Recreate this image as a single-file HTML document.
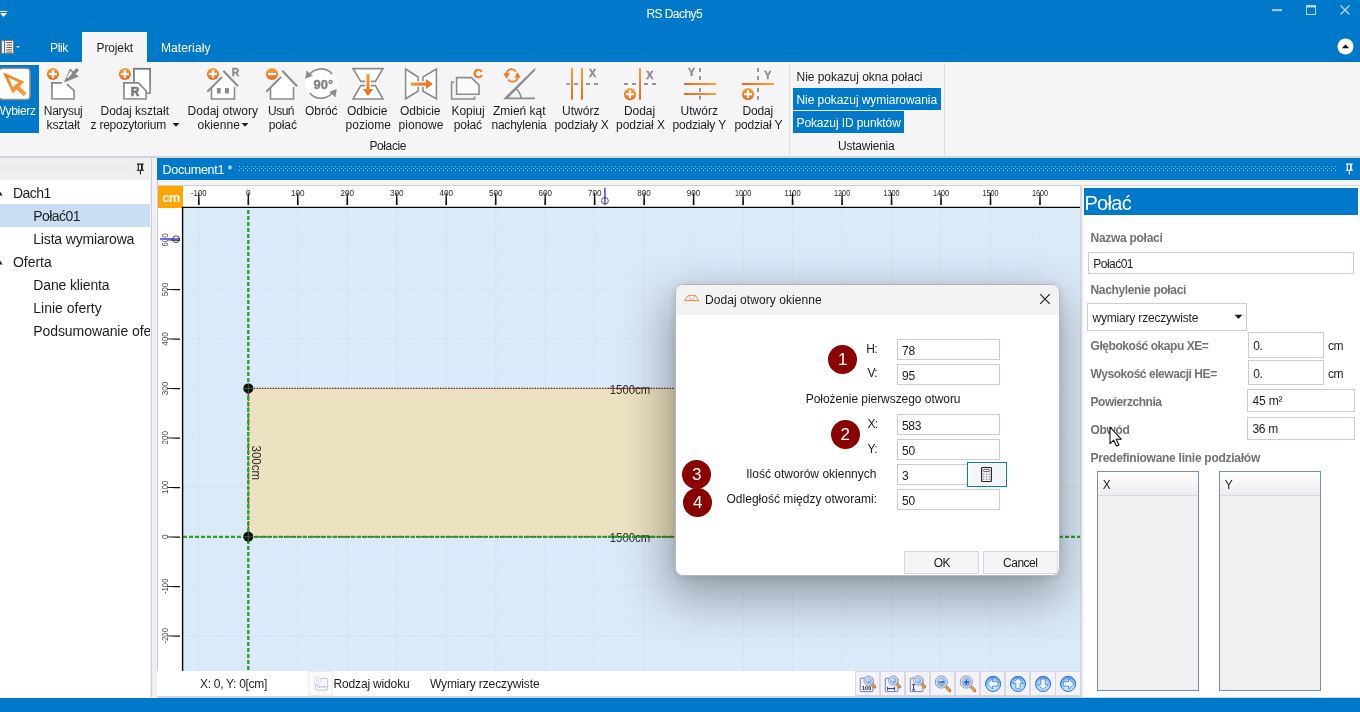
<!DOCTYPE html>
<html lang="pl"><head><meta charset="utf-8"><title>RS Dachy5</title>
<style>
html,body{margin:0;padding:0;}
body{width:1360px;height:712px;overflow:hidden;position:relative;background:#fff;font-family:"Liberation Sans", "DejaVu Sans", sans-serif;}
#app{position:absolute;left:0;top:0;width:1360px;height:712px;overflow:hidden;will-change:transform;}
#app div,#app svg{position:absolute;box-sizing:border-box;}
.t{position:absolute;white-space:pre;}
</style></head><body><div id="app">
<div style="left:0px;top:0px;width:1360px;height:62px;background:#0079cb;"></div>
<span class="t" style="left:646.5px;top:6.0px;line-height:16px;font-size:12px;letter-spacing:-0.578px;color:#fff;font-weight:400;">RS Dachy5</span>
<svg style="left:1268px;top:0;width:92px;height:24px" viewBox="0 0 92 24"><rect x="4" y="9" width="10" height="2.2" fill="#9dcbef"/><rect x="38.5" y="5.5" width="9" height="9" fill="none" stroke="#b5d8f3" stroke-width="1"/><rect x="38" y="5" width="10" height="2.5" fill="#b5d8f3"/><path d="M72.5 5.5 L81.5 14.5 M81.5 5.5 L72.5 14.5" stroke="#b5d8f3" stroke-width="1.3" fill="none"/></svg>
<svg style="left:1337px;top:38px;width:17px;height:17px" viewBox="0 0 17 17"><circle cx="8.5" cy="8.5" r="8" fill="#fff"/><path d="M4.8 10.2 L12.2 10.2 L8.5 6.5 Z" fill="#111"/></svg>
<div style="left:82px;top:32px;width:65px;height:31px;background:#f5f5f7;"></div>
<span class="t" style="left:50px;top:39.5px;line-height:16px;font-size:12px;letter-spacing:-0.336px;color:#fff;font-weight:400;">Plik</span>
<span class="t" style="left:96.5px;top:39.5px;line-height:16px;font-size:12px;letter-spacing:-0.123px;color:#1e1e1e;font-weight:400;">Projekt</span>
<span class="t" style="left:161px;top:39.5px;line-height:16px;font-size:12px;letter-spacing:0.09px;color:#fff;font-weight:400;">Materiały</span>
<svg style="left:0;top:38px;width:24px;height:18px" viewBox="0 38 24 18"><rect x="1.6" y="40.6" width="11.8" height="12.8" fill="#fff" stroke="#84766e" stroke-width="1"/><path d="M4.6 41V53" stroke="#4a4a4a" stroke-width="0.9"/><path d="M6.4 42.6h5.6M6.4 45h5.6M6.4 47.4h5.6M6.4 49.8h5.6M6.4 52h5.6" stroke="#3a3a3a" stroke-width="0.9"/><path d="M15.7 46h4.4l-2.2 2.3z" fill="#c9c5c2"/></svg>
<svg style="left:0;top:8px;width:8px;height:12px" viewBox="0 8 8 12"><rect x="0" y="10.9" width="7.2" height="1.1" fill="#fff"/><path d="M0 13.1h7.2L3.4 17.1z" fill="#fff"/></svg>
<div style="left:0px;top:62px;width:1360px;height:94px;background:#f5f5f7;"></div>
<div style="left:0px;top:156px;width:1360px;height:2px;background:#d2d3dc;"></div>
<div style="left:789px;top:63px;width:1px;height:92px;background:#dcdde4;"></div>
<div style="left:944px;top:63px;width:1px;height:92px;background:#dcdde4;"></div>
<div style="left:0px;top:65px;width:39px;height:68px;background:#0079cb;"></div>
<span class="t" style="left:-5.5px;top:102.8px;line-height:16px;font-size:12px;letter-spacing:-0.283px;color:#fff;font-weight:400;">Wybierz</span>
<span class="t" style="left:43.75px;top:102.8px;line-height:16px;font-size:12px;letter-spacing:-0.277px;color:#1e1e1e;font-weight:400;">Narysuj</span>
<span class="t" style="left:46.5px;top:116.6px;line-height:16px;font-size:12px;letter-spacing:-0.074px;color:#1e1e1e;font-weight:400;">kształt</span>
<span class="t" style="left:100.5px;top:102.8px;line-height:16px;font-size:12px;letter-spacing:-0.016px;color:#1e1e1e;font-weight:400;">Dodaj kształt</span>
<span class="t" style="left:90.5px;top:116.6px;line-height:16px;font-size:12px;letter-spacing:-0.229px;color:#1e1e1e;font-weight:400;">z repozytorium</span>
<span class="t" style="left:187.5px;top:102.8px;line-height:16px;font-size:12px;letter-spacing:0.039px;color:#1e1e1e;font-weight:400;">Dodaj otwory</span>
<span class="t" style="left:197.5px;top:116.6px;line-height:16px;font-size:12px;letter-spacing:0.065px;color:#1e1e1e;font-weight:400;">okienne</span>
<span class="t" style="left:268px;top:102.8px;line-height:16px;font-size:12px;letter-spacing:-0.504px;color:#1e1e1e;font-weight:400;">Usuń</span>
<span class="t" style="left:268.75px;top:116.6px;line-height:16px;font-size:12px;letter-spacing:-0.138px;color:#1e1e1e;font-weight:400;">połać</span>
<span class="t" style="left:305px;top:102.8px;line-height:16px;font-size:12px;letter-spacing:-0.037px;color:#1e1e1e;font-weight:400;">Obróć</span>
<span class="t" style="left:347px;top:102.8px;line-height:16px;font-size:12px;letter-spacing:-0.027px;color:#1e1e1e;font-weight:400;">Odbicie</span>
<span class="t" style="left:345.5px;top:116.6px;line-height:16px;font-size:12px;letter-spacing:0.02px;color:#1e1e1e;font-weight:400;">poziome</span>
<span class="t" style="left:400px;top:102.8px;line-height:16px;font-size:12px;letter-spacing:-0.027px;color:#1e1e1e;font-weight:400;">Odbicie</span>
<span class="t" style="left:398.5px;top:116.6px;line-height:16px;font-size:12px;letter-spacing:0.042px;color:#1e1e1e;font-weight:400;">pionowe</span>
<span class="t" style="left:451.5px;top:102.8px;line-height:16px;font-size:12px;letter-spacing:-0.06px;color:#1e1e1e;font-weight:400;">Kopiuj</span>
<span class="t" style="left:453.75px;top:116.6px;line-height:16px;font-size:12px;letter-spacing:-0.087px;color:#1e1e1e;font-weight:400;">połać</span>
<span class="t" style="left:493px;top:102.8px;line-height:16px;font-size:12px;letter-spacing:-0.021px;color:#1e1e1e;font-weight:400;">Zmień kąt</span>
<span class="t" style="left:491.5px;top:116.6px;line-height:16px;font-size:12px;letter-spacing:-0.237px;color:#1e1e1e;font-weight:400;">nachylenia</span>
<span class="t" style="left:562px;top:102.8px;line-height:16px;font-size:12px;letter-spacing:0.026px;color:#1e1e1e;font-weight:400;">Utwórz</span>
<span class="t" style="left:554.5px;top:116.6px;line-height:16px;font-size:12px;letter-spacing:-0.113px;color:#1e1e1e;font-weight:400;">podziały X</span>
<span class="t" style="left:624px;top:102.8px;line-height:16px;font-size:12px;letter-spacing:-0.072px;color:#1e1e1e;font-weight:400;">Dodaj</span>
<span class="t" style="left:616px;top:116.6px;line-height:16px;font-size:12px;letter-spacing:-0.042px;color:#1e1e1e;font-weight:400;">podział X</span>
<span class="t" style="left:680.5px;top:102.8px;line-height:16px;font-size:12px;letter-spacing:0.026px;color:#1e1e1e;font-weight:400;">Utwórz</span>
<span class="t" style="left:672.5px;top:116.6px;line-height:16px;font-size:12px;letter-spacing:-0.166px;color:#1e1e1e;font-weight:400;">podziały Y</span>
<span class="t" style="left:742.5px;top:102.8px;line-height:16px;font-size:12px;letter-spacing:-0.172px;color:#1e1e1e;font-weight:400;">Dodaj</span>
<span class="t" style="left:734.5px;top:116.6px;line-height:16px;font-size:12px;letter-spacing:-0.128px;color:#1e1e1e;font-weight:400;">podział Y</span>
<svg style="left:172px;top:122px;width:8px;height:6px" viewBox="0 0 8 6"><path d="M0.5 1h7L4 4.8z" fill="#1e1e1e"/></svg>
<svg style="left:241px;top:122px;width:8px;height:6px" viewBox="0 0 8 6"><path d="M0.5 1h7L4 4.8z" fill="#1e1e1e"/></svg>
<span class="t" style="left:369.5px;top:137.5px;line-height:16px;font-size:12px;letter-spacing:-0.408px;color:#1e1e1e;font-weight:400;">Połacie</span>
<span class="t" style="left:796.5px;top:69.0px;line-height:16px;font-size:12px;letter-spacing:-0.033px;color:#1e1e1e;font-weight:400;">Nie pokazuj okna połaci</span>
<div style="left:793px;top:88px;width:148px;height:22px;background:#0079cb;"></div>
<span class="t" style="left:796.5px;top:92.0px;line-height:16px;font-size:12px;letter-spacing:-0.065px;color:#fff;font-weight:400;">Nie pokazuj wymiarowania</span>
<div style="left:793px;top:111px;width:111px;height:22px;background:#0079cb;"></div>
<span class="t" style="left:796.5px;top:114.5px;line-height:16px;font-size:12px;letter-spacing:-0.101px;color:#fff;font-weight:400;">Pokazuj ID punktów</span>
<span class="t" style="left:838px;top:138.0px;line-height:16px;font-size:12px;letter-spacing:-0.22px;color:#1e1e1e;font-weight:400;">Ustawienia</span>
<svg style="left:0;top:62px;width:790px;height:44px" viewBox="0 62 790 44" font-family="Liberation Sans, DejaVu Sans, sans-serif"><defs><linearGradient id="og" x1="0" y1="0" x2="0" y2="1"><stop offset="0" stop-color="#f6a23e"/><stop offset="1" stop-color="#e8691c"/></linearGradient><linearGradient id="oh" x1="0" y1="0" x2="1" y2="0"><stop offset="0" stop-color="#f6a23e"/><stop offset="1" stop-color="#e8691c"/></linearGradient><linearGradient id="oh2" x1="1" y1="0" x2="0" y2="0"><stop offset="0" stop-color="#f6a23e"/><stop offset="1" stop-color="#e8691c"/></linearGradient><linearGradient id="od" x1="0" y1="0" x2="1" y2="1"><stop offset="0" stop-color="#ee7a22"/><stop offset="1" stop-color="#f7a545"/></linearGradient><linearGradient id="gg" gradientUnits="userSpaceOnUse" x1="0" y1="68" x2="0" y2="100"><stop offset="0" stop-color="#747678"/><stop offset="1" stop-color="#9a9b9d"/></linearGradient></defs><rect x="-1" y="68.3" width="31" height="31.2" rx="3.5" fill="#fff" stroke="#8d8d8f" stroke-width="1.6"/><path d="M3 72.4 L24.6 81.8 L19.6 86.4 L26.8 93.2 L23.6 96.3 L16.6 89.4 L12.8 93.8 Z" fill="url(#od)"/><path d="M8.4 77.6 L18.6 82.3 L12.9 87.2 Z" fill="#fff"/><path d="M61.9 82.9 H51.9 V98.9 H74.1 V90.6 L66.8 84.1" fill="#fff" stroke="url(#gg)" stroke-width="1.8"/><path d="M63.9 82.6 L70.1 68.2 L73.2 71.6 L76.6 67.9 L79 70.2 L75.4 73.9 L78.9 76.5 Z" fill="#858688"/><path d="M66.4 78.4 L70.4 70.8 L72.3 73 L68.4 77.4 Z" fill="#fff"/><circle cx="53" cy="74" r="6.1" fill="url(#og)"/><rect x="49" y="72.9" width="8" height="2.2" fill="#fff"/><rect x="51.9" y="70" width="2.2" height="8" fill="#fff"/><rect x="133.9" y="68.8" width="16.2" height="24.2" fill="#fff" stroke="url(#gg)" stroke-width="1.8"/><path d="M123.9 82.9 H138.3 L146.1 90.9 V98.9 H123.9 Z" fill="#fff" stroke="url(#gg)" stroke-width="1.8"/><text x="135" y="95.9" font-size="13.6" font-weight="700" fill="#7b7c7e" stroke="#7b7c7e" stroke-width="0.7" text-anchor="middle" textLength="8.6" lengthAdjust="spacingAndGlyphs">R</text><circle cx="124.9" cy="74" r="6.1" fill="url(#og)"/><rect x="120.9" y="72.9" width="8" height="2.2" fill="#fff"/><rect x="123.80000000000001" y="70" width="2.2" height="8" fill="#fff"/><path d="M211.5 86.5 V99 H234.5 V86.5 L223.0 74 Z" fill="#fff"/><path d="M211.5 87.5 V99 H234.5 V87" fill="none" stroke="#8b8c8e" stroke-width="1.6"/><path d="M207.3 91.7 L222.1 77 M223.3 70.8 L238.1 86.2" fill="none" stroke="#8b8c8e" stroke-width="2"/><rect x="216.9" y="88" width="3.8" height="5.5" fill="#8b8c8e"/><rect x="225.0" y="88" width="3.9" height="5.5" fill="#8b8c8e"/><text x="235.5" y="76" font-size="10.4" font-weight="700" fill="#8b8c8e" stroke="#8b8c8e" stroke-width="0.45" text-anchor="middle">R</text><circle cx="213" cy="74" r="6.1" fill="url(#og)"/><rect x="209" y="72.9" width="8" height="2.2" fill="#fff"/><rect x="211.9" y="70" width="2.2" height="8" fill="#fff"/><path d="M270.5 86.5 V99 H293.5 V86.5 L282.0 74 Z" fill="#fff"/><path d="M270.5 87.5 V99 H293.5 V87" fill="none" stroke="#8b8c8e" stroke-width="1.6"/><path d="M266.3 91.7 L281.1 77 M282.3 70.8 L297.1 86.2" fill="none" stroke="#8b8c8e" stroke-width="2"/><circle cx="272" cy="74" r="6.1" fill="url(#og)"/><rect x="268" y="72.9" width="8" height="2.2" fill="#fff"/><circle cx="321" cy="83.6" r="15.8" fill="#fff"/><path d="M332.2 74.2 A14.6 14.6 0 0 0 307.9 77.2" fill="none" stroke="#8b8c8e" stroke-width="1.7"/><path d="M305.2 78.8 L306.6 70.6 L312.8 75.8 Z" fill="#8b8c8e"/><path d="M309.8 93 A14.6 14.6 0 0 0 334.1 90" fill="none" stroke="#8b8c8e" stroke-width="1.7"/><path d="M336.8 89 L335.4 97.2 L329.2 92 Z" fill="#8b8c8e"/><text x="323.3" y="88.8" font-size="13.4" font-weight="700" fill="#808184" stroke="#808184" stroke-width="0.35" text-anchor="middle" textLength="19.6" lengthAdjust="spacingAndGlyphs">90°</text><path d="M353 68.6 H383 L375.4 81.4 H360.8 Z" fill="#fff" stroke="#8b8c8e" stroke-width="1.6" stroke-linejoin="miter"/><path d="M360.8 85.6 H375.4 L383 99 H353 Z" fill="#fff" stroke="#8b8c8e" stroke-width="1.6"/><path d="M366.5 74 H369.6 V89 H373.4 L368 96 L362.8 89 H366.5 Z" fill="url(#og)" stroke="#fff" stroke-width="2.4" paint-order="stroke"/><path d="M405.6 69 L418 77 V91.2 L405.6 98.8 Z" fill="#fff" stroke="#8b8c8e" stroke-width="1.6"/><path d="M436.4 69 L423 77 V91.2 L436.4 98.8 Z" fill="#fff" stroke="#8b8c8e" stroke-width="1.6"/><path d="M411 82.4 H426 V79 L432.8 84 L426 89 V85.7 H411 Z" fill="url(#oh)" stroke="#fff" stroke-width="2.4" paint-order="stroke"/><path d="M454.2 82 H451.6 V99 H474.6 V96.6" fill="none" stroke="#8b8c8e" stroke-width="1.6"/><path d="M456.6 77.6 H471.4 L479 85.2 V94.2 H456.6 Z" fill="#fafafb" stroke="#8b8c8e" stroke-width="1.6"/><text x="478" y="77.7" font-size="12.6" font-weight="700" fill="#ee7d24" stroke="#ee7d24" stroke-width="0.4" text-anchor="middle" textLength="9.6" lengthAdjust="spacingAndGlyphs">C</text><path d="M503 99.2 H535 V97.6 H508.6 L535.2 70.4 V67.8 Z" fill="#8b8c8e"/><path d="M516 88.4 Q520.4 92.6 521.2 98.4" fill="none" stroke="#8b8c8e" stroke-width="1.5"/><path d="M507 77.4 A5.3 5.3 0 0 1 516 71.6" fill="none" stroke="#ee7d24" stroke-width="1.7"/><path d="M517 73.4 A5.3 5.3 0 0 1 508.2 79.4" fill="none" stroke="#ee7d24" stroke-width="1.7"/><path d="M503.2 73.4 L509.8 73 L506.8 78.8 Z" fill="#ee7d24"/><path d="M520.8 77.4 L514.4 77.8 L517.4 72.2 Z" fill="#ee7d24"/><rect x="566.4" y="83.1" width="3.2000000000000455" height="1.8" fill="#8b8c8e"/><rect x="574" y="83.1" width="4" height="1.8" fill="#8b8c8e"/><rect x="586" y="83.1" width="4" height="1.8" fill="#8b8c8e"/><rect x="594" y="83.1" width="4" height="1.8" fill="#8b8c8e"/><rect x="571" y="68" width="2" height="31.6" fill="url(#og)"/><rect x="581" y="68" width="2" height="31.6" fill="url(#og)"/><text x="592.6" y="76.7" font-size="10.6" font-weight="700" fill="#8b8c8e" stroke="#8b8c8e" stroke-width="0.4" text-anchor="middle">X</text><rect x="624" y="83.1" width="4" height="1.8" fill="#8b8c8e"/><rect x="632" y="83.1" width="4" height="1.8" fill="#8b8c8e"/><rect x="644" y="83.1" width="4" height="1.8" fill="#8b8c8e"/><rect x="652" y="83.1" width="4" height="1.8" fill="#8b8c8e"/><rect x="639" y="68" width="2" height="31.6" fill="url(#og)"/><text x="649.7" y="79.2" font-size="10.6" font-weight="700" fill="#8b8c8e" stroke="#8b8c8e" stroke-width="0.4" text-anchor="middle">X</text><circle cx="630" cy="94.2" r="6.1" fill="url(#og)"/><rect x="626" y="93.10000000000001" width="8" height="2.2" fill="#fff"/><rect x="628.9" y="90.2" width="2.2" height="8" fill="#fff"/><rect x="699.1" y="68" width="1.8" height="4" fill="#8b8c8e"/><rect x="699.1" y="76" width="1.8" height="4" fill="#8b8c8e"/><rect x="699.1" y="88" width="1.8" height="3.799999999999997" fill="#8b8c8e"/><rect x="699.1" y="95.8" width="1.8" height="3.799999999999997" fill="#8b8c8e"/><rect x="684" y="83" width="32" height="2" fill="url(#oh2)"/><rect x="684" y="93" width="32" height="2" fill="url(#oh2)"/><text x="691.6" y="75.5" font-size="10.6" font-weight="700" fill="#8b8c8e" stroke="#8b8c8e" stroke-width="0.4" text-anchor="middle">Y</text><rect x="757.1" y="68" width="1.8" height="4" fill="#8b8c8e"/><rect x="757.1" y="76" width="1.8" height="4" fill="#8b8c8e"/><rect x="757.1" y="88" width="1.8" height="4" fill="#8b8c8e"/><rect x="757.1" y="96" width="1.8" height="3.799999999999997" fill="#8b8c8e"/><rect x="742" y="83" width="32" height="2" fill="url(#oh2)"/><text x="767.8" y="78.5" font-size="10.6" font-weight="700" fill="#8b8c8e" stroke="#8b8c8e" stroke-width="0.4" text-anchor="middle">Y</text><circle cx="748" cy="94.2" r="6.1" fill="url(#og)"/><rect x="744" y="93.10000000000001" width="8" height="2.2" fill="#fff"/><rect x="746.9" y="90.2" width="2.2" height="8" fill="#fff"/></svg>
<div style="left:0px;top:158px;width:150px;height:22px;background:#efeff2;"></div>
<div style="left:0px;top:180px;width:150px;height:517px;background:#fff;"></div>
<div style="left:150px;top:158px;width:7px;height:539px;background:#f0f0f4;"></div>
<div style="left:151px;top:158px;width:1.2px;height:539px;background:#cbccd9;"></div>
<svg style="left:0px;top:166px;width:126px;height:5px" viewBox="0 0 126 5"><defs><pattern id="p0" width="4" height="4" patternUnits="userSpaceOnUse"><rect x="0" y="0" width="1" height="1" fill="#d3d4db"/><rect x="2" y="2" width="1" height="1" fill="#d3d4db"/></pattern></defs><rect width="126" height="5" fill="url(#p0)"/></svg>
<svg style="left:135.5px;top:162.5px;width:9px;height:12px" viewBox="0 0 9 12"><path d="M1 1.1h6.6M2.3 1.1V7M0.8 7.3h7.2M4.4 7.8V11.6" stroke="#1a1a1a" stroke-width="1.1" fill="none"/><rect x="5" y="1.1" width="1.8" height="6" fill="#1a1a1a"/></svg>
<div style="left:0px;top:204px;width:150px;height:23px;background:#c9def5;"></div>
<span class="t" style="left:13px;top:183.7px;line-height:18px;font-size:14px;letter-spacing:-0.544px;color:#1e1e1e;font-weight:400;">Dach1</span>
<span class="t" style="left:33.25px;top:206.7px;line-height:18px;font-size:14px;letter-spacing:-0.549px;color:#1e1e1e;font-weight:400;">Połać01</span>
<span class="t" style="left:33.25px;top:229.7px;line-height:18px;font-size:14px;letter-spacing:-0.166px;color:#1e1e1e;font-weight:400;">Lista wymiarowa</span>
<span class="t" style="left:13px;top:252.7px;line-height:18px;font-size:14px;letter-spacing:-0.026px;color:#1e1e1e;font-weight:400;">Oferta</span>
<span class="t" style="left:33.25px;top:275.7px;line-height:18px;font-size:14px;letter-spacing:-0.132px;color:#1e1e1e;font-weight:400;">Dane klienta</span>
<span class="t" style="left:33.25px;top:298.7px;line-height:18px;font-size:14px;letter-spacing:0.001px;color:#1e1e1e;font-weight:400;">Linie oferty</span>
<div style="left:0;top:319px;width:150px;height:24px;overflow:hidden">
<span class="t" style="left:33.25px;top:2.7px;line-height:18px;font-size:14px;letter-spacing:-0.073px;color:#1e1e1e;font-weight:400;">Podsumowanie oferty</span>
</div>
<svg style="left:0;top:190px;width:4px;height:8px" viewBox="0 0 4 8"><path d="M0 5.4V1.6L2.6 5.4z" fill="#1e1e1e"/></svg>
<svg style="left:0;top:259px;width:4px;height:8px" viewBox="0 0 4 8"><path d="M0 5.4V1.6L2.6 5.4z" fill="#1e1e1e"/></svg>
<div style="left:157px;top:158px;width:1203px;height:22px;background:#0079cb;"></div>
<span class="t" style="left:162.5px;top:161.5px;line-height:16px;font-size:12.6px;letter-spacing:-0.301px;color:#fff;font-weight:400;">Document1 *</span>
<svg style="left:239px;top:166px;width:1098px;height:5px" viewBox="0 0 1098 5"><defs><pattern id="p239" width="4" height="4" patternUnits="userSpaceOnUse"><rect x="0" y="0" width="1" height="1" fill="#a9d1f1"/><rect x="2" y="2" width="1" height="1" fill="#a9d1f1"/></pattern></defs><rect width="1098" height="5" fill="url(#p239)"/></svg>
<svg style="left:1345px;top:162.5px;width:9px;height:12px" viewBox="0 0 9 12"><path d="M1 1.1h6.6M2.3 1.1V7M0.8 7.3h7.2M4.4 7.8V11.6" stroke="#ffffff" stroke-width="1.1" fill="none"/><rect x="5" y="1.1" width="1.8" height="6" fill="#ffffff"/></svg>
<div style="left:157px;top:180px;width:1203px;height:5.2px;background:#f4f4f7;"></div>
<div style="left:157px;top:185px;width:924px;height:512px;background:#fff;"></div>
<div style="left:156.6px;top:180px;width:1.2px;height:517px;background:#cbccda;"></div>
<div style="left:157px;top:184.8px;width:924px;height:1px;background:#cdcfde;"></div>
<div style="left:183px;top:208px;width:897px;height:463px;background:#dbeaf9;"></div>
<div style="left:158px;top:186px;width:25px;height:22px;background:#ffa500;"></div>
<span class="t" style="left:162.2px;top:188.6px;line-height:18px;font-size:13px;letter-spacing:-0.7px;color:#fff;font-weight:700;">cm</span>
<svg style="left:157px;top:185px;width:924px;height:486px" viewBox="157 185 924 486" font-family="Liberation Sans, DejaVu Sans, sans-serif"><line x1="198.8" y1="208" x2="198.8" y2="671" stroke="#cdd3d9" stroke-width="0.8" stroke-dasharray="1.5 1.5" opacity="0.8"/><line x1="297.8" y1="208" x2="297.8" y2="671" stroke="#cdd3d9" stroke-width="0.8" stroke-dasharray="1.5 1.5" opacity="0.8"/><line x1="347.3" y1="208" x2="347.3" y2="671" stroke="#cdd3d9" stroke-width="0.8" stroke-dasharray="1.5 1.5" opacity="0.8"/><line x1="396.7" y1="208" x2="396.7" y2="671" stroke="#cdd3d9" stroke-width="0.8" stroke-dasharray="1.5 1.5" opacity="0.8"/><line x1="446.2" y1="208" x2="446.2" y2="671" stroke="#cdd3d9" stroke-width="0.8" stroke-dasharray="1.5 1.5" opacity="0.8"/><line x1="495.7" y1="208" x2="495.7" y2="671" stroke="#cdd3d9" stroke-width="0.8" stroke-dasharray="1.5 1.5" opacity="0.8"/><line x1="545.2" y1="208" x2="545.2" y2="671" stroke="#cdd3d9" stroke-width="0.8" stroke-dasharray="1.5 1.5" opacity="0.8"/><line x1="594.7" y1="208" x2="594.7" y2="671" stroke="#cdd3d9" stroke-width="0.8" stroke-dasharray="1.5 1.5" opacity="0.8"/><line x1="644.1" y1="208" x2="644.1" y2="671" stroke="#cdd3d9" stroke-width="0.8" stroke-dasharray="1.5 1.5" opacity="0.8"/><line x1="693.6" y1="208" x2="693.6" y2="671" stroke="#cdd3d9" stroke-width="0.8" stroke-dasharray="1.5 1.5" opacity="0.8"/><line x1="743.1" y1="208" x2="743.1" y2="671" stroke="#cdd3d9" stroke-width="0.8" stroke-dasharray="1.5 1.5" opacity="0.8"/><line x1="792.6" y1="208" x2="792.6" y2="671" stroke="#cdd3d9" stroke-width="0.8" stroke-dasharray="1.5 1.5" opacity="0.8"/><line x1="842.1" y1="208" x2="842.1" y2="671" stroke="#cdd3d9" stroke-width="0.8" stroke-dasharray="1.5 1.5" opacity="0.8"/><line x1="891.5" y1="208" x2="891.5" y2="671" stroke="#cdd3d9" stroke-width="0.8" stroke-dasharray="1.5 1.5" opacity="0.8"/><line x1="941.0" y1="208" x2="941.0" y2="671" stroke="#cdd3d9" stroke-width="0.8" stroke-dasharray="1.5 1.5" opacity="0.8"/><line x1="990.5" y1="208" x2="990.5" y2="671" stroke="#cdd3d9" stroke-width="0.8" stroke-dasharray="1.5 1.5" opacity="0.8"/><line x1="1040.0" y1="208" x2="1040.0" y2="671" stroke="#cdd3d9" stroke-width="0.8" stroke-dasharray="1.5 1.5" opacity="0.8"/><line x1="183" y1="635.8" x2="1080" y2="635.8" stroke="#cdd3d9" stroke-width="0.8" stroke-dasharray="1.5 1.5" opacity="0.8"/><line x1="183" y1="586.3" x2="1080" y2="586.3" stroke="#cdd3d9" stroke-width="0.8" stroke-dasharray="1.5 1.5" opacity="0.8"/><line x1="183" y1="487.3" x2="1080" y2="487.3" stroke="#cdd3d9" stroke-width="0.8" stroke-dasharray="1.5 1.5" opacity="0.8"/><line x1="183" y1="437.8" x2="1080" y2="437.8" stroke="#cdd3d9" stroke-width="0.8" stroke-dasharray="1.5 1.5" opacity="0.8"/><line x1="183" y1="388.4" x2="1080" y2="388.4" stroke="#cdd3d9" stroke-width="0.8" stroke-dasharray="1.5 1.5" opacity="0.8"/><line x1="183" y1="338.9" x2="1080" y2="338.9" stroke="#cdd3d9" stroke-width="0.8" stroke-dasharray="1.5 1.5" opacity="0.8"/><line x1="183" y1="289.4" x2="1080" y2="289.4" stroke="#cdd3d9" stroke-width="0.8" stroke-dasharray="1.5 1.5" opacity="0.8"/><line x1="183" y1="239.9" x2="1080" y2="239.9" stroke="#cdd3d9" stroke-width="0.8" stroke-dasharray="1.5 1.5" opacity="0.8"/><rect x="248.3" y="388.4" width="742.2" height="148.4" fill="#ece1c0"/><rect x="248.3" y="388.4" width="742.2" height="148.4" fill="none" stroke="#7a2222" stroke-width="1.4" stroke-dasharray="1.6 1.1"/><line x1="248.3" y1="210" x2="248.3" y2="671" stroke="#2aa12a" stroke-width="2.4" stroke-dasharray="4 2"/><line x1="183" y1="536.8" x2="1080" y2="536.8" stroke="#2aa12a" stroke-width="2.2" stroke-dasharray="4 2"/><text x="630" y="394" font-size="12.6" fill="#2e2e2e" text-anchor="middle" textLength="40.4" lengthAdjust="spacingAndGlyphs">1500cm</text><line x1="608" y1="388.4" x2="652" y2="388.4" stroke="#7a2222" stroke-width="1" stroke-dasharray="1.6 1.1"/><text x="630" y="541.8" font-size="12.6" fill="#2e2e2e" text-anchor="middle" textLength="40.4" lengthAdjust="spacingAndGlyphs">1500cm</text><line x1="608" y1="536.8" x2="652" y2="536.8" stroke="#2aa12a" stroke-width="2.2" stroke-dasharray="4 2"/><text transform="translate(251.6,445.5) rotate(90)" font-size="12.6" fill="#2e2e2e" textLength="34.5" lengthAdjust="spacingAndGlyphs">300cm</text><circle cx="248.3" cy="388.4" r="5" fill="#0a0a0a"/><path d="M243.3 388.4h10M248.3 383.4v10" stroke="#2f7d2f" stroke-width="0.9"/><circle cx="248.3" cy="536.8" r="5" fill="#0a0a0a"/><path d="M243.3 536.8h10M248.3 531.8v10" stroke="#2f7d2f" stroke-width="0.9"/><line x1="182" y1="207.3" x2="1080" y2="207.3" stroke="#000" stroke-width="1.2"/><line x1="182.6" y1="207" x2="182.6" y2="671" stroke="#000" stroke-width="1.4"/><path d="M198.37 192.5H199.27L199.67 201V205H197.97V201Z" fill="#111"/><text x="198.8" y="196.2" font-size="8.2" fill="#2a2a2a" text-anchor="middle" textLength="15.6" lengthAdjust="spacingAndGlyphs">-100</text><path d="M247.85 192.5H248.75L249.15 201V205H247.45V201Z" fill="#111"/><text x="248.3" y="196.2" font-size="8.2" fill="#2a2a2a" text-anchor="middle" textLength="4.6" lengthAdjust="spacingAndGlyphs">0</text><path d="M297.33 192.5H298.23L298.63 201V205H296.93V201Z" fill="#111"/><text x="297.8" y="196.2" font-size="8.2" fill="#2a2a2a" text-anchor="middle" textLength="13.6" lengthAdjust="spacingAndGlyphs">100</text><path d="M346.81 192.5H347.71L348.11 201V205H346.41V201Z" fill="#111"/><text x="347.3" y="196.2" font-size="8.2" fill="#2a2a2a" text-anchor="middle" textLength="13.6" lengthAdjust="spacingAndGlyphs">200</text><path d="M396.29 192.5H397.19L397.59 201V205H395.89V201Z" fill="#111"/><text x="396.7" y="196.2" font-size="8.2" fill="#2a2a2a" text-anchor="middle" textLength="13.6" lengthAdjust="spacingAndGlyphs">300</text><path d="M445.77 192.5H446.67L447.07 201V205H445.37V201Z" fill="#111"/><text x="446.2" y="196.2" font-size="8.2" fill="#2a2a2a" text-anchor="middle" textLength="13.6" lengthAdjust="spacingAndGlyphs">400</text><path d="M495.25 192.5H496.15L496.55 201V205H494.85V201Z" fill="#111"/><text x="495.7" y="196.2" font-size="8.2" fill="#2a2a2a" text-anchor="middle" textLength="13.6" lengthAdjust="spacingAndGlyphs">500</text><path d="M544.73 192.5H545.63L546.03 201V205H544.33V201Z" fill="#111"/><text x="545.2" y="196.2" font-size="8.2" fill="#2a2a2a" text-anchor="middle" textLength="13.6" lengthAdjust="spacingAndGlyphs">600</text><path d="M594.21 192.5H595.11L595.51 201V205H593.81V201Z" fill="#111"/><text x="594.7" y="196.2" font-size="8.2" fill="#2a2a2a" text-anchor="middle" textLength="13.6" lengthAdjust="spacingAndGlyphs">700</text><path d="M643.69 192.5H644.59L644.99 201V205H643.29V201Z" fill="#111"/><text x="644.1" y="196.2" font-size="8.2" fill="#2a2a2a" text-anchor="middle" textLength="13.6" lengthAdjust="spacingAndGlyphs">800</text><path d="M693.17 192.5H694.07L694.47 201V205H692.77V201Z" fill="#111"/><text x="693.6" y="196.2" font-size="8.2" fill="#2a2a2a" text-anchor="middle" textLength="13.6" lengthAdjust="spacingAndGlyphs">900</text><path d="M742.65 192.5H743.55L743.95 201V205H742.25V201Z" fill="#111"/><text x="743.1" y="196.2" font-size="8.2" fill="#2a2a2a" text-anchor="middle" textLength="16.2" lengthAdjust="spacingAndGlyphs">1000</text><path d="M792.13 192.5H793.03L793.43 201V205H791.73V201Z" fill="#111"/><text x="792.6" y="196.2" font-size="8.2" fill="#2a2a2a" text-anchor="middle" textLength="16.2" lengthAdjust="spacingAndGlyphs">1100</text><path d="M841.61 192.5H842.51L842.91 201V205H841.21V201Z" fill="#111"/><text x="842.1" y="196.2" font-size="8.2" fill="#2a2a2a" text-anchor="middle" textLength="16.2" lengthAdjust="spacingAndGlyphs">1200</text><path d="M891.09 192.5H891.99L892.39 201V205H890.69V201Z" fill="#111"/><text x="891.5" y="196.2" font-size="8.2" fill="#2a2a2a" text-anchor="middle" textLength="16.2" lengthAdjust="spacingAndGlyphs">1300</text><path d="M940.57 192.5H941.47L941.87 201V205H940.17V201Z" fill="#111"/><text x="941.0" y="196.2" font-size="8.2" fill="#2a2a2a" text-anchor="middle" textLength="16.2" lengthAdjust="spacingAndGlyphs">1400</text><path d="M990.05 192.5H990.95L991.35 201V205H989.65V201Z" fill="#111"/><text x="990.5" y="196.2" font-size="8.2" fill="#2a2a2a" text-anchor="middle" textLength="16.2" lengthAdjust="spacingAndGlyphs">1500</text><path d="M1039.53 192.5H1040.43L1040.83 201V205H1039.13V201Z" fill="#111"/><text x="1040.0" y="196.2" font-size="8.2" fill="#2a2a2a" text-anchor="middle" textLength="16.2" lengthAdjust="spacingAndGlyphs">1600</text><path d="M167 635.4H180V636.7H176L167 636.2Z" fill="#111"/><text transform="translate(168,635.8) rotate(-90)" font-size="8.2" fill="#4a4a4a" text-anchor="middle" textLength="15.6" lengthAdjust="spacingAndGlyphs">-200</text><path d="M167 585.9H180V587.2H176L167 586.7Z" fill="#111"/><text transform="translate(168,586.3) rotate(-90)" font-size="8.2" fill="#4a4a4a" text-anchor="middle" textLength="15.6" lengthAdjust="spacingAndGlyphs">-100</text><path d="M167 536.4H180V537.7H176L167 537.2Z" fill="#111"/><text transform="translate(168,536.8) rotate(-90)" font-size="8.2" fill="#4a4a4a" text-anchor="middle" textLength="4.6" lengthAdjust="spacingAndGlyphs">0</text><path d="M167 486.9H180V488.2H176L167 487.7Z" fill="#111"/><text transform="translate(168,487.3) rotate(-90)" font-size="8.2" fill="#4a4a4a" text-anchor="middle" textLength="13.6" lengthAdjust="spacingAndGlyphs">100</text><path d="M167 437.4H180V438.7H176L167 438.2Z" fill="#111"/><text transform="translate(168,437.8) rotate(-90)" font-size="8.2" fill="#4a4a4a" text-anchor="middle" textLength="13.6" lengthAdjust="spacingAndGlyphs">200</text><path d="M167 388.0H180V389.3H176L167 388.8Z" fill="#111"/><text transform="translate(168,388.4) rotate(-90)" font-size="8.2" fill="#4a4a4a" text-anchor="middle" textLength="13.6" lengthAdjust="spacingAndGlyphs">300</text><path d="M167 338.5H180V339.8H176L167 339.3Z" fill="#111"/><text transform="translate(168,338.9) rotate(-90)" font-size="8.2" fill="#4a4a4a" text-anchor="middle" textLength="13.6" lengthAdjust="spacingAndGlyphs">400</text><path d="M167 289.0H180V290.3H176L167 289.8Z" fill="#111"/><text transform="translate(168,289.4) rotate(-90)" font-size="8.2" fill="#4a4a4a" text-anchor="middle" textLength="13.6" lengthAdjust="spacingAndGlyphs">500</text><path d="M167 239.5H180V240.8H176L167 240.3Z" fill="#111"/><text transform="translate(168,239.9) rotate(-90)" font-size="8.2" fill="#4a4a4a" text-anchor="middle" textLength="13.6" lengthAdjust="spacingAndGlyphs">600</text><line x1="604.9" y1="188" x2="604.9" y2="204.4" stroke="#6060f2" stroke-width="1.8"/><circle cx="604.9" cy="200.8" r="3.4" fill="none" stroke="#444" stroke-width="0.9"/><line x1="160" y1="239" x2="180" y2="239" stroke="#6060f2" stroke-width="1.8"/><circle cx="176" cy="239.2" r="3.4" fill="none" stroke="#333" stroke-width="0.9"/></svg>
<div style="left:157px;top:671px;width:924px;height:26px;background:#fff;"></div>
<div style="left:157px;top:696px;width:1203px;height:1.6px;background:#d3d3dd;"></div>
<span class="t" style="left:200px;top:676.4px;line-height:16px;font-size:12px;letter-spacing:-0.297px;color:#1e1e1e;font-weight:400;">X: 0, Y: 0[cm]</span>
<div style="left:308.3px;top:671.4px;width:24.4px;height:24.4px;background:#fafafb;border:1px solid #ececf1;"></div>
<svg style="left:312px;top:675px;width:18px;height:17px" viewBox="312 675 18 17"><rect x="315.4" y="678.4" width="12.2" height="11.8" rx="1" fill="#f7f8fc" stroke="#c3c9e0" stroke-width="1"/><circle cx="317.5" cy="680.6" r="3.4" fill="#fafafb" stroke="#c3c9e0" stroke-width="0.9" stroke-dasharray="1.5 0.9"/><circle cx="317.5" cy="680.6" r="1.2" fill="none" stroke="#c3c9e0" stroke-width="0.8"/><path d="M317.6 684.4V686.6H326M319.6 686.8v1.2M321.8 686.8v1.2M324 686.8v1.2M325.8 686.8v1.2" stroke="#b9c0da" stroke-width="0.9" fill="none"/></svg>
<span class="t" style="left:333.5px;top:676.4px;line-height:16px;font-size:12px;letter-spacing:-0.157px;color:#1e1e1e;font-weight:400;">Rodzaj widoku</span>
<span class="t" style="left:430px;top:676.4px;line-height:16px;font-size:12px;letter-spacing:-0.127px;color:#1e1e1e;font-weight:400;">Wymiary rzeczywiste</span>
<div style="left:854.5px;top:671px;width:226px;height:25px;background:#d6d7e3;"></div>
<div style="left:855.5px;top:671.6px;width:23.8px;height:23.6px;background:#f3f3f7;"></div>
<div style="left:880.53px;top:671.6px;width:23.8px;height:23.6px;background:#f3f3f7;"></div>
<div style="left:905.56px;top:671.6px;width:23.8px;height:23.6px;background:#f3f3f7;"></div>
<div style="left:930.59px;top:671.6px;width:23.8px;height:23.6px;background:#f3f3f7;"></div>
<div style="left:955.62px;top:671.6px;width:23.8px;height:23.6px;background:#f3f3f7;"></div>
<div style="left:980.65px;top:671.6px;width:23.8px;height:23.6px;background:#f3f3f7;"></div>
<div style="left:1005.6800000000001px;top:671.6px;width:23.8px;height:23.6px;background:#f3f3f7;"></div>
<div style="left:1030.71px;top:671.6px;width:23.8px;height:23.6px;background:#f3f3f7;"></div>
<div style="left:1055.74px;top:671.6px;width:23.8px;height:23.6px;background:#f3f3f7;"></div>
<svg style="left:855px;top:671px;width:226px;height:25px" viewBox="855 671 226 25" font-family="Liberation Sans, DejaVu Sans, sans-serif"><defs><radialGradient id="gl" cx="0.42" cy="0.38" r="0.7"><stop offset="0" stop-color="#ffffff"/><stop offset="0.35" stop-color="#9cc8f4"/><stop offset="1" stop-color="#5e9be6"/></radialGradient><radialGradient id="bc" cx="0.5" cy="0.62" r="0.62"><stop offset="0" stop-color="#e2f8fe"/><stop offset="0.6" stop-color="#a8dcf8"/><stop offset="1" stop-color="#3f7cdc"/></radialGradient></defs><rect x="860.3" y="678.2" width="12.6" height="13.4" rx="0.8" fill="#eef1f9" stroke="#6f7fb8" stroke-width="1"/><text x="866.6" y="690" font-size="5.6" font-weight="700" fill="#222" text-anchor="middle" textLength="9.2" lengthAdjust="spacingAndGlyphs">100</text><path d="M871.8 683.9 L874.8 687" stroke="#a86a2c" stroke-width="3" stroke-linecap="round"/><path d="M872.1 684.2 L874.8 687" stroke="#f2a84c" stroke-width="1.6" stroke-linecap="round"/><circle cx="868.6" cy="680.7" r="4.6" fill="#eef2fb" stroke="#8a93bf" stroke-width="1"/><circle cx="868.6" cy="680.7" r="3.0" fill="url(#gl)" stroke="#a9b4dc" stroke-width="0.6"/><rect x="885.3" y="678.2" width="12.6" height="13.4" rx="0.8" fill="#eef1f9" stroke="#6f7fb8" stroke-width="1"/><path d="M887.6 688.6H894.6M887.6 686.8v3.6M894.6 686.8v3.6" stroke="#2a3a8a" stroke-width="1"/><path d="M896.5 683.7 L899.6 686.8" stroke="#a86a2c" stroke-width="3" stroke-linecap="round"/><path d="M896.8 684.0 L899.6 686.8" stroke="#f2a84c" stroke-width="1.6" stroke-linecap="round"/><circle cx="893.3" cy="680.5" r="4.6" fill="#eef2fb" stroke="#8a93bf" stroke-width="1"/><circle cx="893.3" cy="680.5" r="3.0" fill="url(#gl)" stroke="#a9b4dc" stroke-width="0.6"/><rect x="910.3" y="678.2" width="12.6" height="13.4" rx="0.8" fill="#eef1f9" stroke="#6f7fb8" stroke-width="1"/><path d="M913.6 684.6V690M912.2 684.6h2.8M912.2 690h2.8" stroke="#2a3a8a" stroke-width="1"/><path d="M921.4 683.7 L924.6 686.8" stroke="#a86a2c" stroke-width="3" stroke-linecap="round"/><path d="M921.7 684.0 L924.6 686.8" stroke="#f2a84c" stroke-width="1.6" stroke-linecap="round"/><circle cx="918.2" cy="680.5" r="4.6" fill="#eef2fb" stroke="#8a93bf" stroke-width="1"/><circle cx="918.2" cy="680.5" r="3.0" fill="url(#gl)" stroke="#a9b4dc" stroke-width="0.6"/><path d="M945.6 686.3 L949.8 690.6" stroke="#a86a2c" stroke-width="3" stroke-linecap="round"/><path d="M945.9 686.6 L949.8 690.6" stroke="#f2a84c" stroke-width="1.6" stroke-linecap="round"/><circle cx="941.3" cy="682" r="6.1" fill="#eef2fb" stroke="#8a93bf" stroke-width="1"/><circle cx="941.3" cy="682" r="4.5" fill="url(#gl)" stroke="#a9b4dc" stroke-width="0.6"/><rect x="938.6999999999999" y="681.4" width="5.2" height="1.2" fill="#2a3a8a"/><path d="M970.6 686.3 L974.8 690.6" stroke="#a86a2c" stroke-width="3" stroke-linecap="round"/><path d="M970.9 686.6 L974.8 690.6" stroke="#f2a84c" stroke-width="1.6" stroke-linecap="round"/><circle cx="966.3" cy="682" r="6.1" fill="#eef2fb" stroke="#8a93bf" stroke-width="1"/><circle cx="966.3" cy="682" r="4.5" fill="url(#gl)" stroke="#a9b4dc" stroke-width="0.6"/><rect x="963.6999999999999" y="681.4" width="5.2" height="1.2" fill="#2a3a8a"/><rect x="965.6999999999999" y="679.4" width="1.2" height="5.2" fill="#2a3a8a"/><circle cx="993.1" cy="683.9" r="7.6" fill="url(#bc)" stroke="#3d74d4" stroke-width="1"/><path transform="rotate(0 993.1 683.9)" d="M987.4 683.9 L992.6 678.6999999999999 V681.6999999999999 H998.0 V686.1 H992.6 V689.1 Z" fill="#f4fcff" stroke="#3a72d2" stroke-width="0.8" stroke-linejoin="round"/><circle cx="1018" cy="683.9" r="7.6" fill="url(#bc)" stroke="#3d74d4" stroke-width="1"/><path transform="rotate(90 1018 683.9)" d="M1012.3 683.9 L1017.5 678.6999999999999 V681.6999999999999 H1022.9 V686.1 H1017.5 V689.1 Z" fill="#f4fcff" stroke="#3a72d2" stroke-width="0.8" stroke-linejoin="round"/><circle cx="1043.1" cy="683.9" r="7.6" fill="url(#bc)" stroke="#3d74d4" stroke-width="1"/><path transform="rotate(270 1043.1 683.9)" d="M1037.3999999999999 683.9 L1042.6 678.6999999999999 V681.6999999999999 H1048.0 V686.1 H1042.6 V689.1 Z" fill="#f4fcff" stroke="#3a72d2" stroke-width="0.8" stroke-linejoin="round"/><circle cx="1068.1" cy="683.9" r="7.6" fill="url(#bc)" stroke="#3d74d4" stroke-width="1"/><path transform="rotate(180 1068.1 683.9)" d="M1062.3999999999999 683.9 L1067.6 678.6999999999999 V681.6999999999999 H1073.0 V686.1 H1067.6 V689.1 Z" fill="#f4fcff" stroke="#3a72d2" stroke-width="0.8" stroke-linejoin="round"/></svg>
<div style="left:1080.4px;top:181px;width:3.6px;height:516px;background:#f4f4f8;"></div>
<div style="left:1080.4px;top:185px;width:1.2px;height:512px;background:#d6d7e2;"></div>
<div style="left:1084px;top:185px;width:276px;height:512px;background:#fff;"></div>
<div style="left:1084px;top:184.5px;width:276px;height:0.9px;background:#d2d3df;"></div>
<div style="left:1084px;top:188px;width:274px;height:27px;background:#0079cb;"></div>
<span class="t" style="left:1084.4px;top:190.0px;line-height:26px;font-size:20px;letter-spacing:-0.686px;color:#fff;font-weight:400;">Połać</span>
<span class="t" style="left:1090.5px;top:230.0px;line-height:16px;font-size:12px;letter-spacing:-0.28px;color:#727272;font-weight:700;">Nazwa połaci</span>
<div style="left:1088px;top:252px;width:266px;height:22px;background:#fff;border:1px solid #c9cbdc;"></div>
<span class="t" style="left:1093.25px;top:255.5px;line-height:16px;font-size:12px;letter-spacing:-0.518px;color:#1e1e1e;font-weight:400;">Połać01</span>
<span class="t" style="left:1090.5px;top:282.0px;line-height:16px;font-size:12px;letter-spacing:-0.346px;color:#727272;font-weight:700;">Nachylenie połaci</span>
<div style="left:1087px;top:303px;width:160px;height:28px;background:#fff;border:1px solid #c9cbdc;"></div>
<span class="t" style="left:1092.5px;top:309.5px;line-height:16px;font-size:12px;letter-spacing:-0.189px;color:#1e1e1e;font-weight:400;">wymiary rzeczywiste</span>
<svg style="left:1234px;top:314px;width:9px;height:6px" viewBox="0 0 9 6"><path d="M0.5 0.8h8L4.5 5z" fill="#1e1e1e"/></svg>
<span class="t" style="left:1090.5px;top:338.0px;line-height:16px;font-size:12px;letter-spacing:-0.446px;color:#727272;font-weight:700;">Głębokość okapu XE=</span>
<div style="left:1248px;top:332px;width:76px;height:26px;background:#fff;border:1px solid #c9cbdc;"></div>
<span class="t" style="left:1253.3px;top:338.0px;line-height:16px;font-size:12px;letter-spacing:-0.358px;color:#1e1e1e;font-weight:400;">0.</span>
<span class="t" style="left:1328px;top:338.0px;line-height:16px;font-size:12px;letter-spacing:-0.5px;color:#1e1e1e;font-weight:400;">cm</span>
<span class="t" style="left:1090.5px;top:366.0px;line-height:16px;font-size:12px;letter-spacing:-0.444px;color:#727272;font-weight:700;">Wysokość elewacji HE=</span>
<div style="left:1248px;top:360px;width:76px;height:25px;background:#fff;border:1px solid #c9cbdc;"></div>
<span class="t" style="left:1253.3px;top:366.0px;line-height:16px;font-size:12px;letter-spacing:-0.358px;color:#1e1e1e;font-weight:400;">0.</span>
<span class="t" style="left:1328px;top:366.0px;line-height:16px;font-size:12px;letter-spacing:-0.5px;color:#1e1e1e;font-weight:400;">cm</span>
<span class="t" style="left:1090.5px;top:394.2px;line-height:16px;font-size:12px;letter-spacing:-0.474px;color:#727272;font-weight:700;">Powierzchnia</span>
<div style="left:1247px;top:389px;width:108px;height:23px;background:#fff;border:1px solid #c9cbdc;"></div>
<span class="t" style="left:1252.4px;top:393.0px;line-height:16px;font-size:12px;letter-spacing:-0.118px;color:#1e1e1e;font-weight:400;">45 m²</span>
<span class="t" style="left:1090.5px;top:422.0px;line-height:16px;font-size:12px;letter-spacing:-0.334px;color:#727272;font-weight:700;">Obwód</span>
<div style="left:1247px;top:417px;width:108px;height:23px;background:#fff;border:1px solid #c9cbdc;"></div>
<span class="t" style="left:1252.4px;top:421.3px;line-height:16px;font-size:12px;letter-spacing:-0.272px;color:#1e1e1e;font-weight:400;">36 m</span>
<span class="t" style="left:1090.5px;top:450.2px;line-height:16px;font-size:12px;letter-spacing:-0.262px;color:#727272;font-weight:700;">Predefiniowane linie podziałów</span>
<div style="left:1097px;top:471px;width:102px;height:220px;background:#f0f0f0;border:1px solid #6f8fbe;"></div>
<div style="left:1098px;top:472px;width:100px;height:24px;background:linear-gradient(#ffffff,#f4f4f6 60%,#ececf0);border-bottom:1px solid #d9d9de;"></div>
<span class="t" style="left:1102.8px;top:477.0px;line-height:16px;font-size:12px;letter-spacing:-0.7px;color:#1e1e1e;font-weight:400;">X</span>
<div style="left:1219px;top:471px;width:102px;height:220px;background:#f0f0f0;border:1px solid #6f8fbe;"></div>
<div style="left:1220px;top:472px;width:100px;height:24px;background:linear-gradient(#ffffff,#f4f4f6 60%,#ececf0);border-bottom:1px solid #d9d9de;"></div>
<span class="t" style="left:1224.8px;top:477.0px;line-height:16px;font-size:12px;letter-spacing:-0.7px;color:#1e1e1e;font-weight:400;">Y</span>
<svg style="left:1109.2px;top:425.9px;width:14px;height:22px" viewBox="0 0 14 22"><path d="M1 1V17.6L4.7 14.2L7.5 20L9.9 18.9L7.2 13.2H12.2Z" fill="#fff" stroke="#111" stroke-width="1.1" stroke-linejoin="round"/></svg>
<div style="left:157px;top:185px;width:923.5px;height:512px;overflow:hidden"><div style="left:518.3px;top:99.2px;width:385px;height:292px;border-radius:8px;box-shadow:-3px 18px 48px 6px rgba(0,0,0,0.32),0 2px 10px rgba(0,0,0,0.12);"></div></div>
<div style="left:675.3px;top:284.2px;width:385px;height:292px;border-radius:8px;background:#fff;border:1px solid #b4b7c0;overflow:hidden"><div style="left:0;top:0;width:384px;height:30px;background:#f3f3f3"></div></div>
<svg style="left:683px;top:293px;width:18px;height:10px" viewBox="683 293 18 10"><path d="M684.4 300.6 L688.2 295.4 H695.4 L698.9 300.6 Z" fill="none" stroke="#f0874a" stroke-width="1" stroke-linejoin="round"/><path d="M688.2 295.4 L691.4 300.6 M695.2 295.6 L691.6 300.4" stroke="#f3a070" stroke-width="0.9" fill="none"/></svg>
<span class="t" style="left:705px;top:292.0px;line-height:16px;font-size:12px;letter-spacing:0.067px;color:#1a1a1a;font-weight:400;">Dodaj otwory okienne</span>
<svg style="left:1039px;top:293px;width:12px;height:12px" viewBox="0 0 12 12"><path d="M1.2 1.2 L10.8 10.8 M10.8 1.2 L1.2 10.8" stroke="#1a1a1a" stroke-width="1.1" fill="none"/></svg>
<div style="left:828.0px;top:345.0px;width:29px;height:29px;border-radius:50%;background:#8a0303;"></div>
<span class="t" style="left:838.0px;top:349.0px;line-height:22px;font-size:17px;letter-spacing:-0.469px;color:#fff;font-weight:400;">1</span>
<div style="left:830.5px;top:420.0px;width:29px;height:29px;border-radius:50%;background:#8a0303;"></div>
<span class="t" style="left:840.5px;top:424.0px;line-height:22px;font-size:17px;letter-spacing:-0.469px;color:#fff;font-weight:400;">2</span>
<div style="left:682.0px;top:459.5px;width:29px;height:29px;border-radius:50%;background:#8a0303;"></div>
<span class="t" style="left:692.0px;top:463.5px;line-height:22px;font-size:17px;letter-spacing:-0.469px;color:#fff;font-weight:400;">3</span>
<div style="left:683.0px;top:487.5px;width:29px;height:29px;border-radius:50%;background:#8a0303;"></div>
<span class="t" style="left:693.0px;top:491.5px;line-height:22px;font-size:17px;letter-spacing:-0.469px;color:#fff;font-weight:400;">4</span>
<span class="t" style="left:866.25px;top:341.0px;line-height:16px;font-size:12px;letter-spacing:-0.625px;color:#1a1a1a;font-weight:400;">H:</span>
<div style="left:897px;top:339px;width:103px;height:21px;background:#fff;border:1px solid #c9cbdc;"></div>
<span class="t" style="left:902px;top:342.8px;line-height:16px;font-size:12px;letter-spacing:-0.18px;color:#1a1a1a;font-weight:400;">78</span>
<span class="t" style="left:867.5px;top:365.0px;line-height:16px;font-size:12px;letter-spacing:-0.7px;color:#1a1a1a;font-weight:400;">V:</span>
<div style="left:897px;top:364px;width:103px;height:21px;background:#fff;border:1px solid #c9cbdc;"></div>
<span class="t" style="left:902px;top:367.8px;line-height:16px;font-size:12px;letter-spacing:-0.18px;color:#1a1a1a;font-weight:400;">95</span>
<span class="t" style="left:805.75px;top:391.0px;line-height:16px;font-size:12px;letter-spacing:-0.05px;color:#1a1a1a;font-weight:400;">Położenie pierwszego otworu</span>
<span class="t" style="left:867.5px;top:416.0px;line-height:16px;font-size:12px;letter-spacing:-0.7px;color:#1a1a1a;font-weight:400;">X:</span>
<div style="left:897px;top:414px;width:103px;height:21px;background:#fff;border:1px solid #c9cbdc;"></div>
<span class="t" style="left:902px;top:417.8px;line-height:16px;font-size:12px;letter-spacing:-0.344px;color:#1a1a1a;font-weight:400;">583</span>
<span class="t" style="left:867.5px;top:441.0px;line-height:16px;font-size:12px;letter-spacing:-0.594px;color:#1a1a1a;font-weight:400;">Y:</span>
<div style="left:897px;top:439px;width:103px;height:21px;background:#fff;border:1px solid #c9cbdc;"></div>
<span class="t" style="left:902px;top:442.8px;line-height:16px;font-size:12px;letter-spacing:-0.18px;color:#1a1a1a;font-weight:400;">50</span>
<span class="t" style="left:746.25px;top:466.0px;line-height:16px;font-size:12px;letter-spacing:0.008px;color:#1a1a1a;font-weight:400;">Ilość otworów okiennych</span>
<div style="left:897px;top:464px;width:71px;height:21px;background:#fff;border:1px solid #c9cbdc;"></div>
<span class="t" style="left:902px;top:467.8px;line-height:16px;font-size:12px;letter-spacing:-0.688px;color:#1a1a1a;font-weight:400;">3</span>
<div style="left:967px;top:462px;width:40px;height:25px;background:#f5f5f7;border:1px solid #0078d4;box-shadow:inset 0 0 0 1px #fff;"></div>
<svg style="left:980px;top:466px;width:13px;height:17px" viewBox="980 466 13 17"><rect x="981.6" y="467.5" width="9.8" height="14" rx="0.8" fill="#fbfbfb" stroke="#2a2420" stroke-width="1.2"/><rect x="983.6" y="469.4" width="5.8" height="2.2" rx="0.8" fill="#fff" stroke="#3a3030" stroke-width="0.8"/><g fill="#8a7a9a"><rect x="983.2" y="473.6" width="1.2" height="1.4"/><rect x="985.9" y="473.6" width="1.2" height="1.4"/><rect x="988.6" y="473.6" width="1.2" height="1.4"/><rect x="983.2" y="476.2" width="1.2" height="1.4"/><rect x="985.9" y="476.2" width="1.2" height="1.4"/><rect x="988.6" y="476.2" width="1.2" height="1.4"/><rect x="983.2" y="478.8" width="1.2" height="1.2"/><rect x="985.9" y="478.8" width="1.2" height="1.2"/><rect x="988.6" y="478.8" width="1.2" height="1.2"/></g></svg>
<span class="t" style="left:726.5px;top:491.0px;line-height:16px;font-size:12px;letter-spacing:0.017px;color:#1a1a1a;font-weight:400;">Odległość między otworami:</span>
<div style="left:897px;top:489px;width:103px;height:21px;background:#fff;border:1px solid #c9cbdc;"></div>
<span class="t" style="left:902px;top:492.8px;line-height:16px;font-size:12px;letter-spacing:-0.18px;color:#1a1a1a;font-weight:400;">50</span>
<div style="left:904px;top:551px;width:75px;height:23px;background:#f5f5f8;border:1px solid #d5d6e0;"></div>
<span class="t" style="left:933.75px;top:554.5px;line-height:16px;font-size:12px;letter-spacing:-0.7px;color:#1a1a1a;font-weight:400;">OK</span>
<div style="left:983px;top:551px;width:75px;height:23px;background:#f5f5f8;border:1px solid #d5d6e0;"></div>
<span class="t" style="left:1003px;top:554.5px;line-height:16px;font-size:12px;letter-spacing:-0.477px;color:#1a1a1a;font-weight:400;">Cancel</span>
<div style="left:0px;top:697.6px;width:1360px;height:15px;background:#0079cb;"></div>
</div></body></html>
